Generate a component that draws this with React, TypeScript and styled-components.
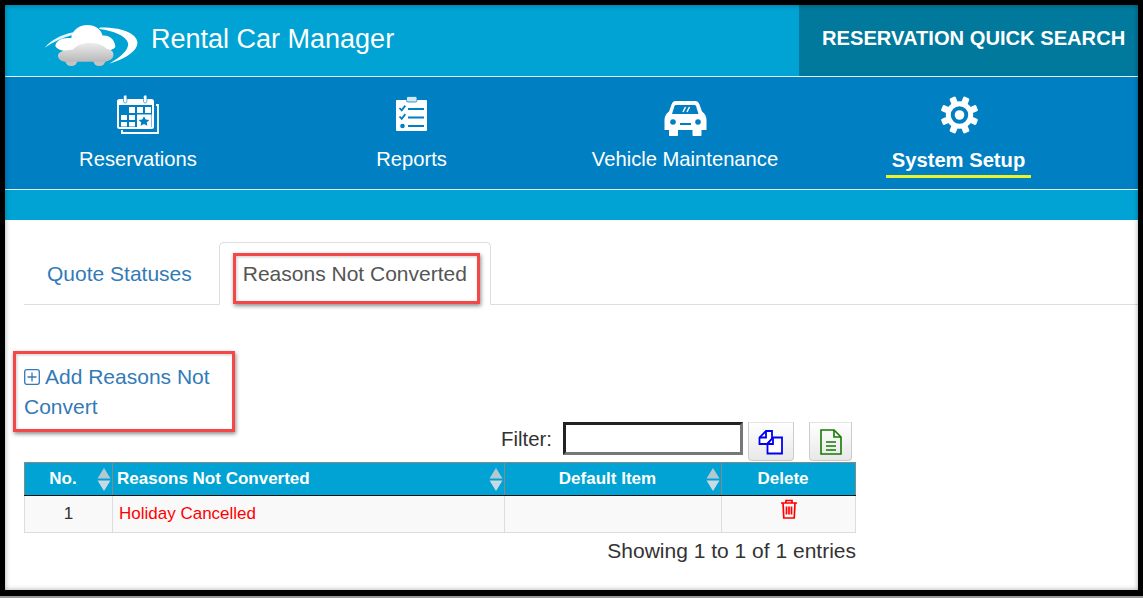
import styled, { createGlobalStyle } from "styled-components";

const FONT = `"Liberation Sans", Arial, sans-serif`;

const GlobalStyle = createGlobalStyle`
  html, body {
    margin: 0;
    padding: 0;
    background: #000;
    font-family: ${FONT};
  }
`;

const Frame = styled.div`
  box-sizing: border-box;
  width: 1143px;
  height: 598px;
  padding: 5px 5px 6px;
  background: #000;
  border-bottom: 2px solid #999;
  overflow: hidden;
`;

const Screen = styled.div`
  position: relative;
  height: 100%;
  background: #fff;
  &::after {
    content: "";
    position: absolute;
    inset: 0;
    pointer-events: none;
    box-shadow: inset 0 0 5px rgba(0, 0, 0, 0.35);
  }
`;

const TopBar = styled.header`
  display: flex;
  justify-content: space-between;
  height: 71px;
  background: #00a3d3;
  border-bottom: 1px solid #e6f6fb;
`;

const Brand = styled.div`
  display: flex;
  align-items: flex-start;
  padding-left: 25px;
`;

const LogoSvg = styled.svg`
  display: block;
  width: 120px;
  height: 60px;
  margin-top: 10px;
`;

const BrandName = styled.div`
  margin: 18px 0 0 1px;
  font-size: 27px;
  line-height: 32px;
  color: #fff;
`;

const QuickSearch = styled.div`
  box-sizing: border-box;
  width: 339px;
  padding: 21px 0 0 23px;
  background: #00799d;
  color: #fff;
  font-size: 20.15px;
  font-weight: bold;
  line-height: 24px;
  white-space: nowrap;
`;

const NavBar = styled.nav`
  display: grid;
  grid-template-columns: repeat(4, 266px);
  column-gap: 7.5px;
  height: 112px;
  background: #007fc3;
  border-bottom: 1px solid #e6f6fb;
`;

const NavItem = styled.div`
  display: flex;
  flex-direction: column;
  align-items: center;
  padding-top: 17px;
  color: #fff;
`;

const NavIcon = styled.svg`
  display: block;
  width: 46px;
  height: 44px;
`;

const NavLabel = styled.div<{ $active?: boolean }>`
  margin-top: ${(p) => (p.$active ? "10px" : "9px")};
  padding: 0 6px 3px;
  font-size: 20.2px;
  line-height: 24px;
  font-weight: ${(p) => (p.$active ? "bold" : "normal")};
  border-bottom: 3px solid ${(p) => (p.$active ? "#e8f52a" : "transparent")};
  white-space: nowrap;
`;

const SubBar = styled.div`
  height: 30px;
  background: #00a3d3;
`;

const Content = styled.main`
  padding: 22px 0 0 19px;
  width: 832px;
`;

const Tabs = styled.div`
  display: flex;
  width: 1114px;
  height: 63px;
  box-sizing: border-box;
  border-bottom: 1px solid #ddd;
`;

const Tab = styled.div<{ $active?: boolean }>`
  box-sizing: border-box;
  height: 63px;
  padding: 19px 23px 0 ${(p) => (p.$active ? "23px" : "22px")};
  margin-right: 3px;
  font-size: 21px;
  line-height: 24px;
  white-space: nowrap;
  color: ${(p) => (p.$active ? "#555" : "#337ab7")};
  border: 1px solid ${(p) => (p.$active ? "#ddd" : "transparent")};
  border-bottom-color: ${(p) => (p.$active ? "#fff" : "transparent")};
  border-radius: 5px 5px 0 0;
`;

const AddLink = styled.div`
  width: 200px;
  margin-top: 57px;
  font-size: 21px;
  line-height: 30px;
  color: #337ab7;
`;

const PlusIcon = styled.svg`
  width: 16px;
  height: 16px;
  margin-right: 5px;
  vertical-align: -1px;
`;

const ToolRow = styled.div`
  display: flex;
  justify-content: flex-end;
  align-items: flex-start;
  width: 828px;
  height: 40px;
`;

const FilterLabel = styled.label`
  margin: 5px 11px 0 0;
  font-size: 20.4px;
  line-height: 24px;
  color: #333;
`;

const FilterInput = styled.input`
  box-sizing: border-box;
  width: 180px;
  height: 33px;
  border: 3px solid;
  border-color: #222 #777 #777 #222;
  background: #fff;
  outline: none;
`;

const ExportButton = styled.button<{ $gap: number }>`
  box-sizing: border-box;
  display: flex;
  align-items: center;
  justify-content: center;
  width: ${(p) => (p.$gap > 10 ? 43 : 46)}px;
  height: 39px;
  margin-left: ${(p) => p.$gap}px;
  padding: 0;
  border: 1px solid #ccc;
  border-top-color: #e4e4e4;
  border-radius: 0 0 4px 4px;
  background: linear-gradient(#fff, #e8e8e8);
`;

const Table = styled.table`
  width: 831px;
  table-layout: fixed;
  border-collapse: collapse;
`;

const HeadCell = styled.th<{ $left?: boolean }>`
  position: relative;
  box-sizing: border-box;
  height: 33px;
  padding: ${(p) => (p.$left ? "0 0 0 4px" : "0 11px 0 0")};
  background: #00a3d3;
  color: #fff;
  font-size: 17px;
  font-weight: bold;
  text-align: ${(p) => (p.$left ? "left" : "center")};
  border: 1px solid #888;
  border-bottom: 1px solid #111;
`;

const SortIcon = styled.svg`
  position: absolute;
  right: 1px;
  top: 5px;
  width: 14px;
  height: 23px;
`;

const BodyCell = styled.td<{ $center?: boolean; $danger?: boolean }>`
  box-sizing: border-box;
  height: 37px;
  padding: 0 ${(p) => (p.$center ? "0" : "6px")};
  background: #f9f9f9;
  border: 1px solid #ddd;
  font-size: 17px;
  color: ${(p) => (p.$danger ? "#f00" : "#333")};
  text-align: ${(p) => (p.$center ? "center" : "left")};
`;

const TrashIcon = styled.svg`
  display: block;
  width: 18px;
  height: 20px;
  margin: -10px auto 0;
`;

const Summary = styled.div`
  margin-top: 6px;
  font-size: 21px;
  line-height: 24px;
  text-align: right;
  color: #333;
`;

const Callout = styled.div<{ $x: number; $y: number; $w: number; $h: number }>`
  position: absolute;
  box-sizing: border-box;
  left: ${(p) => p.$x}px;
  top: ${(p) => p.$y}px;
  width: ${(p) => p.$w}px;
  height: ${(p) => p.$h}px;
  border: 3px solid #f44848;
  box-shadow: 1px 2px 4px rgba(0, 0, 0, 0.45), inset 1px 1px 3px rgba(0, 0, 0, 0.2);
`;

function Logo() {
  return (
    <LogoSvg viewBox="0 0 360 180">
      <defs>
        <linearGradient id="carBody" x1="0" y1="0" x2="0" y2="1">
          <stop offset="0" stopColor="#ececec" />
          <stop offset="1" stopColor="#b9b9b9" />
        </linearGradient>
      </defs>
      <path d="M44 98C62 76 92 60 130 52L128 60C98 68 68 82 44 98Z" fill="#e4f5fb" />
      <path d="M208 38C262 36 316 50 322 80C326 108 282 132 238 146C268 128 298 106 294 84C288 62 250 48 208 42Z" fill="#fff" />
      <path d="M76 92C78 76 100 66 124 70C124 48 146 30 172 30C196 30 214 44 218 62C238 60 254 74 256 94C258 118 84 124 76 92Z" fill="#fff" />
      <circle cx="124" cy="134" r="19" fill="#c4c4c4" />
      <circle cx="208" cy="134" r="19" fill="#c4c4c4" />
      <path d="M84 122C84 110 104 104 128 104C138 92 158 84 180 84C206 84 222 92 230 102C246 104 252 112 250 122C248 134 232 140 218 140H108C94 140 84 132 84 122Z" fill="url(#carBody)" />
    </LogoSvg>
  );
}

function CalendarIcon() {
  return (
    <NavIcon viewBox="0 0 46 44">
      <path d="M41 11h2v28H7v-3" fill="none" stroke="#fff" strokeWidth="1.8" />
      <rect x="3" y="6" width="35" height="28" rx="1.5" fill="none" stroke="#fff" strokeWidth="2" />
      <rect x="3" y="6" width="35" height="5" fill="#fff" />
      <rect x="8.5" y="1" width="3.4" height="8" rx="1.7" fill="#fff" stroke="#007fc3" strokeWidth="0.6" />
      <rect x="28.5" y="1" width="3.4" height="8" rx="1.7" fill="#fff" stroke="#007fc3" strokeWidth="0.6" />
      <g fill="#fff">
        <rect x="14" y="13" width="6" height="6" />
        <rect x="22" y="13" width="6" height="6" />
        <rect x="30" y="13" width="6" height="6" />
        <rect x="6" y="21" width="6" height="5" />
        <rect x="14" y="21" width="6" height="5" />
        <rect x="6" y="28" width="6" height="4.5" />
        <rect x="14" y="28" width="6" height="4.5" />
        <rect x="22" y="20.5" width="14.5" height="12.5" />
      </g>
      <path d="M29 22.3l1.7 3.3 3.6.4-2.6 2.4.7 3.4-3.4-1.8-3.4 1.8.7-3.4-2.6-2.4 3.6-.4z" fill="#007fc3" />
    </NavIcon>
  );
}

function ReportIcon() {
  return (
    <NavIcon viewBox="0 0 46 44">
      <rect x="7" y="6" width="31" height="31" rx="1" fill="#fff" />
      <rect x="17.5" y="2.5" width="10.5" height="5.5" rx="1.5" fill="#cfe9f5" stroke="#007fc3" strokeWidth="0.8" />
      <g fill="none" stroke="#007fc3" strokeWidth="1.8">
        <path d="M10.5 14l2.2 2.4 3.6-4.8" />
        <path d="M10.5 22.5l2.2 2.4 3.6-4.8" />
        <path d="M19 15h16M19 23.5h16M19 32h16" />
      </g>
      <circle cx="13.5" cy="32" r="2.3" fill="#007fc3" />
    </NavIcon>
  );
}

function CarIcon() {
  return (
    <NavIcon viewBox="0 0 46 44">
      <path
        d="M14 7h19c2.500 0 3.500 1 4.500 3.500l2.500 7c3 2 4.500 5 4.500 8.500v10h-5v5c0 .6-.4 1-1 1h-7c-.6 0-1-.4-1-1v-5H16v5c0 .6-.4 1-1 1H8c-.6 0-1-.4-1-1v-5H2.500V26c0-3.500 1.500-6.500 4.500-8.500l2.500-7C10.500 8 11.500 7 14 7z"
        fill="#fff"
      />
      <path d="M14.500 11h18c.8 0 1.300.4 1.600 1.200l2.400 7.800h-26.500l2.400-7.800c.3-.8.800-1.200 2.100-1.200z" fill="#007fc3" />
      <path d="M21 18l2.500-5M25 18l2.500-5" stroke="#fff" strokeWidth="1.5" />
      <circle cx="11" cy="28" r="2.800" fill="#007fc3" />
      <circle cx="36" cy="28" r="2.800" fill="#007fc3" />
      <rect x="18" y="29" width="11" height="2" fill="#007fc3" />
    </NavIcon>
  );
}

function GearIcon() {
  return (
    <NavIcon viewBox="0 0 46 44">
      <g transform="translate(23.500 21)">
        {[0, 45, 90, 135, 180, 225, 270, 315].map((a) => (
          <rect key={a} x="-3.300" y="-19" width="6.600" height="8" rx="1.500" fill="#fff" transform={`rotate(${a + 22.5})`} />
        ))}
        <circle r="11.200" fill="none" stroke="#fff" strokeWidth="5" />
        <circle r="4.800" fill="#fff" />
      </g>
    </NavIcon>
  );
}

function Sort() {
  return (
    <SortIcon viewBox="0 0 14 23">
      <path d="M7 0l6.500 10.500H.5z" fill="#b4c8d2" />
      <path d="M7 23l6.500-10.500H.5z" fill="#c8dae2" />
    </SortIcon>
  );
}

function CopyGlyph() {
  return (
    <svg width="26" height="26" viewBox="0 0 26 26" fill="#fff" stroke="#0000f0" strokeWidth="1.800">
      <path d="M8 2h6v8l-5 5H1.500V8.500z" />
      <path d="M8 2v6.500H1.500" fill="none" />
      <path d="M15 8.500h9v16H9.500v-9.500z" />
      <path d="M15 8.500v6.500H9.500" fill="none" />
    </svg>
  );
}

function SheetGlyph() {
  return (
    <svg width="22" height="26" viewBox="0 0 22 26" fill="none" stroke="#157a00" strokeWidth="1.600">
      <path d="M1 1h13l7 7v17H1z" />
      <path d="M14 1v7h7" />
      <path d="M6 13h10M6 17h10M6 21h10" />
    </svg>
  );
}

const navItems = [
  { label: "Reservations", icon: <CalendarIcon /> },
  { label: "Reports", icon: <ReportIcon /> },
  { label: "Vehicle Maintenance", icon: <CarIcon /> },
  { label: "System Setup", icon: <GearIcon />, active: true },
];

export default function App() {
  return (
    <>
      <GlobalStyle />
      <Frame>
        <Screen>
          <TopBar>
            <Brand>
              <Logo />
              <BrandName>Rental Car Manager</BrandName>
            </Brand>
            <QuickSearch>RESERVATION QUICK SEARCH</QuickSearch>
          </TopBar>
          <NavBar>
            {navItems.map((item) => (
              <NavItem key={item.label}>
                {item.icon}
                <NavLabel $active={item.active}>{item.label}</NavLabel>
              </NavItem>
            ))}
          </NavBar>
          <SubBar />
          <Content>
            <Tabs>
              <Tab>Quote Statuses</Tab>
              <Tab $active>Reasons Not Converted</Tab>
            </Tabs>
            <AddLink>
              <PlusIcon viewBox="0 0 16 16" fill="none" stroke="#337ab7" strokeWidth="1.3">
                <rect x="0.7" y="0.7" width="14.6" height="14.6" rx="2" />
                <path d="M8 3.500v9M3.500 8h9" />
              </PlusIcon>
              Add Reasons Not Convert
            </AddLink>
            <ToolRow>
              <FilterLabel>Filter:</FilterLabel>
              <FilterInput />
              <ExportButton $gap={5}>
                <CopyGlyph />
              </ExportButton>
              <ExportButton $gap={15}>
                <SheetGlyph />
              </ExportButton>
            </ToolRow>
            <Table>
              <colgroup>
                <col style={{ width: 88 }} />
                <col style={{ width: 392 }} />
                <col style={{ width: 217 }} />
                <col style={{ width: 134 }} />
              </colgroup>
              <thead>
                <tr>
                  <HeadCell>
                    No.
                    <Sort />
                  </HeadCell>
                  <HeadCell $left>
                    Reasons Not Converted
                    <Sort />
                  </HeadCell>
                  <HeadCell>
                    Default Item
                    <Sort />
                  </HeadCell>
                  <HeadCell>Delete</HeadCell>
                </tr>
              </thead>
              <tbody>
                <tr>
                  <BodyCell $center>1</BodyCell>
                  <BodyCell $danger>Holiday Cancelled</BodyCell>
                  <BodyCell />
                  <BodyCell $center>
                    <TrashIcon viewBox="0 0 18 20" fill="none" stroke="#f00" strokeWidth="1.700">
                      <path d="M1 4h16M6 4V1.500h6V4M3 4l.8 15h10.400l.8-15" />
                      <path d="M6.500 7.500v8M9 7.500v8M11.500 7.500v8" />
                    </TrashIcon>
                  </BodyCell>
                </tr>
              </tbody>
            </Table>
            <Summary>Showing 1 to 1 of 1 entries</Summary>
          </Content>
          <Callout $x={228} $y={248} $w={247} $h={51} />
          <Callout $x={8} $y={346} $w={222} $h={81} />
        </Screen>
      </Frame>
    </>
  );
}
